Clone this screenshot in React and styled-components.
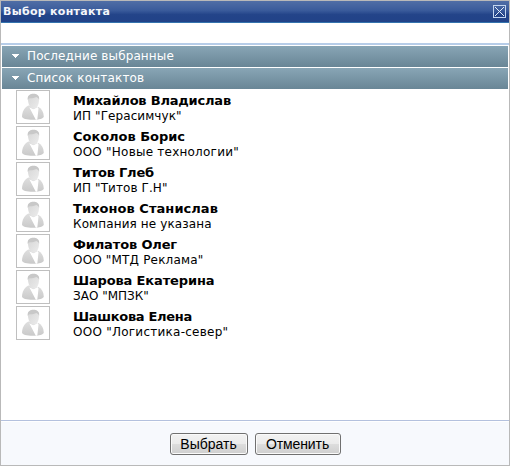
import React from 'react';
import styled, { createGlobalStyle } from 'styled-components';

const GlobalStyle = createGlobalStyle`
  * { box-sizing: border-box; }
  body { margin: 0; background: #fff; font-family: Verdana, "DejaVu Sans", sans-serif; }
`;

const Dialog = styled.div`
  width: 510px;
  height: 466px;
  display: flex;
  flex-direction: column;
  border: 1px solid #b9b9b9;
  background: #fff;
  overflow: hidden;
`;

const TitleBar = styled.header`
  flex: none;
  height: 22px;
  display: flex;
  justify-content: space-between;
  padding: 4px 3px 0 2px;
  border-bottom: 1px solid #3474ae;
  background: linear-gradient(#506ea6 0%, #3a5b9b 45%, #234489 65%, #214288 100%);
`;

const Title = styled.h1`
  margin: 0;
  font-size: 11px;
  line-height: 13px;
  font-weight: bold;
  letter-spacing: ${(p) => p.$spacing}px;
  color: #f4f6fa;
  white-space: nowrap;
`;

const CloseButton = styled.button`
  width: 13px;
  height: 13px;
  padding: 0;
  border: 0;
  background: none;
  svg { display: block; }
`;

const SearchStrip = styled.div`
  flex: none;
  height: 22px;
  margin-bottom: 1px;
  border-bottom: 2px solid #b7cde8;
`;

const SectionHeader = styled.div`
  flex: none;
  height: 21px;
  margin: 0 1px 1px;
  padding: 0 0 1px 10px;
  display: flex;
  align-items: center;
  background: linear-gradient(#88a5b5, #698696);
  color: #fff;
  font-size: 12px;
  line-height: 20px;
  white-space: nowrap;
  svg { flex: none; margin-right: 8px; }
`;

const SectionLabel = styled.span`
  letter-spacing: ${(p) => p.$spacing}px;
`;

const ContactList = styled.ul`
  flex: 1;
  margin: 0;
  padding: 0 0 0 15px;
  list-style: none;
`;

const Contact = styled.li`
  display: flex;
  height: 36px;
`;

const Avatar = styled.div`
  flex: none;
  width: 34px;
  height: 34px;
  margin-right: 23px;
  border: 1px solid #bfbfbf;
  svg { display: block; }
`;

const Details = styled.div`
  padding-top: 3px;
  font-size: 12px;
  line-height: 15px;
  white-space: nowrap;
  color: #000;
`;

const Name = styled.div`
  font-size: 13px;
  font-weight: bold;
  letter-spacing: ${(p) => p.$spacing}px;
`;

const Company = styled.div`
  margin-top: 1px;
  letter-spacing: ${(p) => p.$spacing}px;
`;

const Footer = styled.footer`
  flex: none;
  height: 45px;
  display: flex;
  justify-content: center;
  gap: 7px;
  padding: 12px 0 0 0;
  border-top: 1px solid #b4c1de;
  background: #f7f9fd;
  box-shadow: inset 0 1px #fff;
`;

const Button = styled.button`
  width: ${(p) => p.$width}px;
  height: 22px;
  padding: 0;
  border: 1px solid #707070;
  border-radius: 3px;
  background: linear-gradient(#f2f2f2 0%, #ebebeb 49%, #dddddd 50%, #cfcfcf 100%);
  box-shadow: inset 0 0 0 1px #fafafa;
  font: 14px "Liberation Sans", Arial, sans-serif;
  letter-spacing: ${(p) => p.$spacing}px;
  color: #000;
  white-space: nowrap;
`;

function Arrow() {
  return (
    <svg width="7" height="4" viewBox="0 0 7 4" shapeRendering="crispEdges">
      <path d="M0 0h7v1h-1v1h-1v1h-1v1h-1v-1h-1v-1h-1v-1h-1z" fill="#fff" />
    </svg>
  );
}

function CloseIcon() {
  return (
    <svg width="13" height="13" viewBox="0 0 13 13" shapeRendering="crispEdges">
      <rect x=".5" y=".5" width="12" height="12" fill="none" stroke="#c3d6ef" />
      <path
        d={[2, 3, 4, 5, 6, 7, 8, 9, 10].map((n) => `M${n} ${n}h1v1h-1z M${12 - n} ${n}h1v1h-1z`).join(' ')}
        fill="#e4edf8"
      />
    </svg>
  );
}

function PersonIcon() {
  return (
    <svg width="32" height="32" viewBox="0 0 32 32">
      <defs>
        <linearGradient id="coat" x1="0" y1="0" x2="0" y2="1">
          <stop offset="0" stopColor="#dfdfdf" />
          <stop offset="1" stopColor="#c9c9c9" />
        </linearGradient>
        <linearGradient id="face" x1="0" y1="0" x2="1" y2="1">
          <stop offset="0" stopColor="#d6d6d6" />
          <stop offset="1" stopColor="#ececec" />
        </linearGradient>
      </defs>
      <path d="M11.500 14.500C7.500 16.500 5.300 20 5 25.500c0 2 4.800 3.300 10.900 3.300s10.900-1.400 10.900-3.400c-.3-4.500-2-7.600-5.300-9.400z" fill="url(#coat)" />
      <path d="M12.300 16.300l4.200 2 4-2.300 1 1.500-1.200 11.300h-1.500z" fill="#fff" />
      <path d="M11 8c0-3.500 2-5 5.300-5 3.800 0 5.700 2 5.700 5.500 0 5.200-2 9.300-5.200 9.300-3.500 0-5.800-4.600-5.800-9.800z" fill="url(#face)" />
      <path d="M10.800 9c-.8-4 1.700-6.300 5.600-6.300 4.200 0 6.400 2.300 5.700 6.100-.6-1.500-1.500-2.300-2.700-2.800-2 1.100-4.900 1.300-6.800 1.200-.9.200-1.400.8-1.800 1.800z" fill="#c8c8c8" />
    </svg>
  );
}

const contacts = [
  { name: 'Михайлов Владислав', company: 'ИП "Герасимчук"', ns: -0.2, cs: 0.08 },
  { name: 'Соколов Борис', company: 'ООО "Новые технологии"', ns: -0.03, cs: 0.23 },
  { name: 'Титов Глеб', company: 'ИП "Титов Г.Н"', ns: -0.2, cs: 0.08 },
  { name: 'Тихонов Станислав', company: 'Компания не указана', ns: 0.05, cs: 0.12 },
  { name: 'Филатов Олег', company: 'ООО "МТД Реклама"', ns: -0.14, cs: 0.18 },
  { name: 'Шарова Екатерина', company: 'ЗАО "МПЗК"', ns: -0.14, cs: 0 },
  { name: 'Шашкова Елена', company: 'ООО "Логистика-север"', ns: -0.3, cs: 0.25 },
];

export default function App() {
  return (
    <>
      <GlobalStyle />
      <Dialog>
        <TitleBar>
          <Title $spacing={0.3}>Выбор контакта</Title>
          <CloseButton aria-label="Закрыть"><CloseIcon /></CloseButton>
        </TitleBar>
        <SearchStrip />
        <SectionHeader><Arrow /><SectionLabel $spacing={0.12}>Последние выбранные</SectionLabel></SectionHeader>
        <SectionHeader><Arrow /><SectionLabel $spacing={0.18}>Список контактов</SectionLabel></SectionHeader>
        <ContactList>
          {contacts.map((c) => (
            <Contact key={c.name}>
              <Avatar><PersonIcon /></Avatar>
              <Details>
                <Name $spacing={c.ns}>{c.name}</Name>
                <Company $spacing={c.cs}>{c.company}</Company>
              </Details>
            </Contact>
          ))}
        </ContactList>
        <Footer>
          <Button $width={78} $spacing={0}>Выбрать</Button>
          <Button $width={86} $spacing={-0.1}>Отменить</Button>
        </Footer>
      </Dialog>
    </>
  );
}
